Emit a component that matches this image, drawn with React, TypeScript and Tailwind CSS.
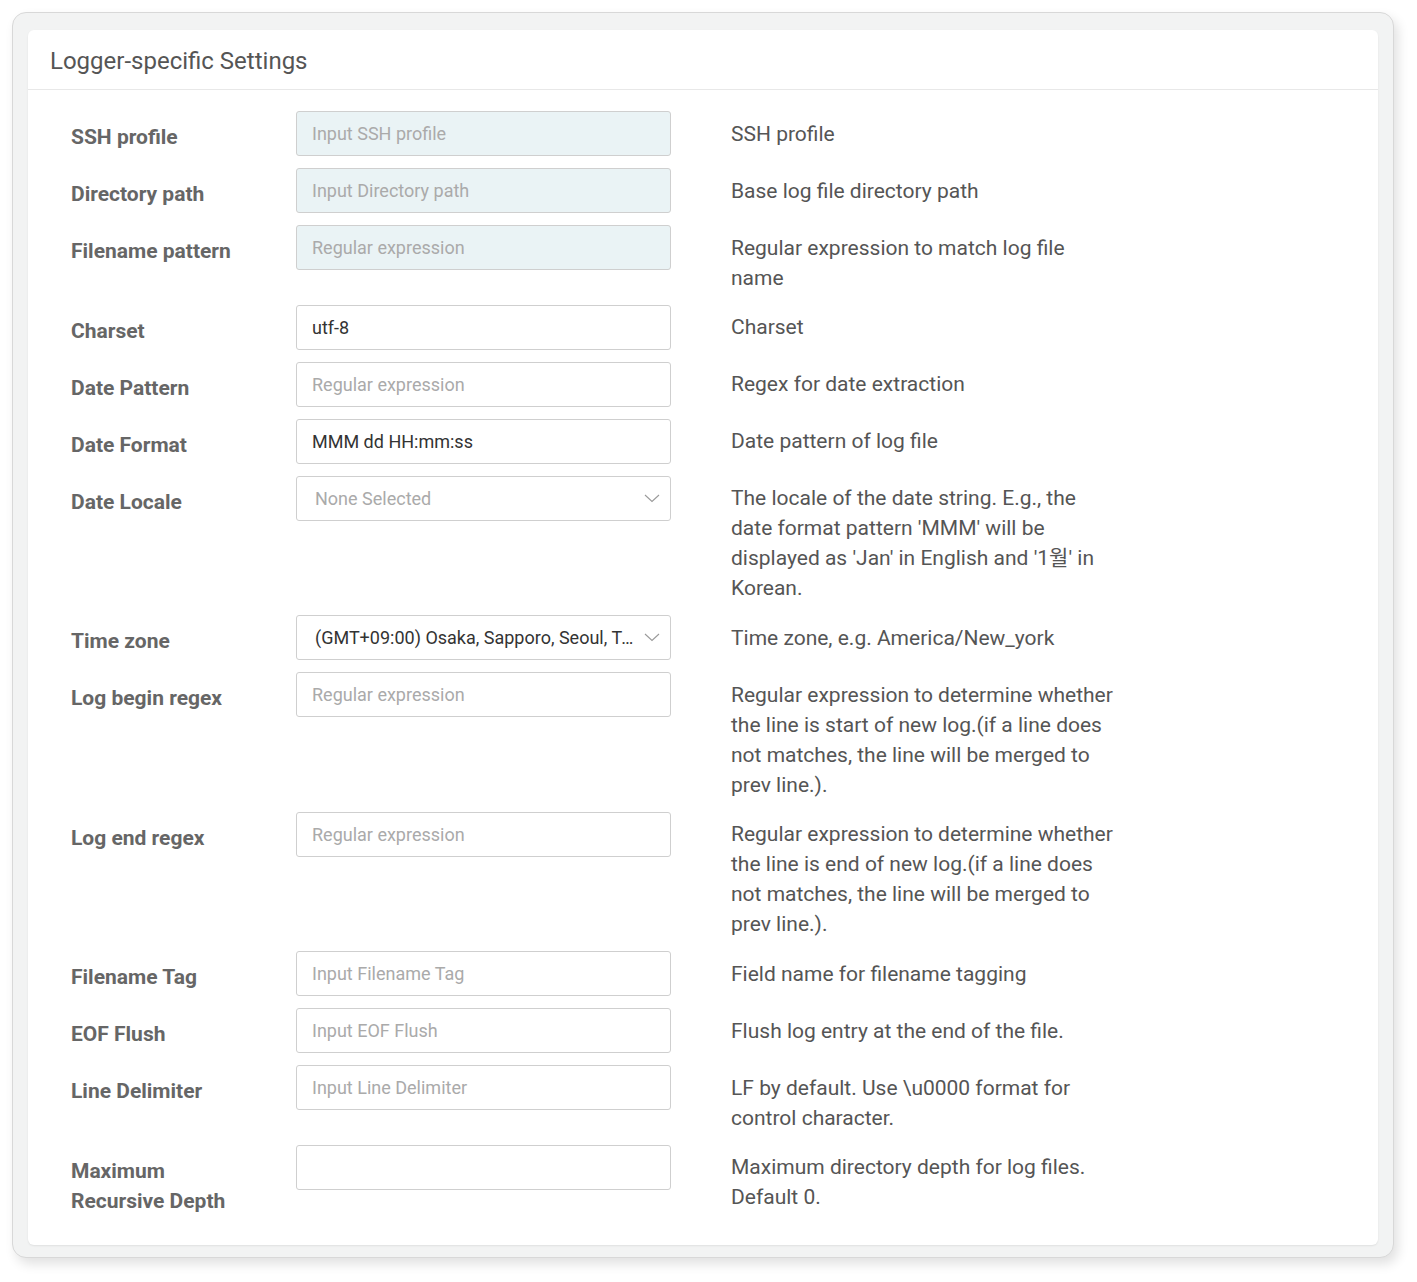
type Field = {
  label: string;
  kind: "input" | "disabled" | "select";
  value?: string;
  placeholder?: string;
  desc: string;
};

const fields: Field[] = [
  { label: "SSH profile", kind: "disabled", placeholder: "Input SSH profile", desc: "SSH profile" },
  { label: "Directory path", kind: "disabled", placeholder: "Input Directory path", desc: "Base log file directory path" },
  { label: "Filename pattern", kind: "disabled", placeholder: "Regular expression", desc: "Regular expression to match log file name" },
  { label: "Charset", kind: "input", value: "utf-8", desc: "Charset" },
  { label: "Date Pattern", kind: "input", placeholder: "Regular expression", desc: "Regex for date extraction" },
  { label: "Date Format", kind: "input", value: "MMM dd HH:mm:ss", desc: "Date pattern of log file" },
  {
    label: "Date Locale",
    kind: "select",
    placeholder: "None Selected",
    desc: "The locale of the date string. E.g., the date format pattern 'MMM' will be displayed as 'Jan' in English and '1월' in Korean.",
  },
  { label: "Time zone", kind: "select", value: "(GMT+09:00) Osaka, Sapporo, Seoul, Tokyo", desc: "Time zone, e.g. America/New_york" },
  {
    label: "Log begin regex",
    kind: "input",
    placeholder: "Regular expression",
    desc: "Regular expression to determine whether the line is start of new log.(if a line does not matches, the line will be merged to prev line.).",
  },
  {
    label: "Log end regex",
    kind: "input",
    placeholder: "Regular expression",
    desc: "Regular expression to determine whether the line is end of new log.(if a line does not matches, the line will be merged to prev line.).",
  },
  { label: "Filename Tag", kind: "input", placeholder: "Input Filename Tag", desc: "Field name for filename tagging" },
  { label: "EOF Flush", kind: "input", placeholder: "Input EOF Flush", desc: "Flush log entry at the end of the file." },
  { label: "Line Delimiter", kind: "input", placeholder: "Input Line Delimiter", desc: "LF by default. Use \\u0000 format for control character." },
  { label: "Maximum Recursive Depth", kind: "input", value: "", desc: "Maximum directory depth for log files. Default 0." },
];

function Chevron() {
  return (
    <svg width="16" height="9" viewBox="0 0 16 9" fill="none" className="shrink-0">
      <path d="M1 1l7 6.5L15 1" stroke="#9a9a9a" strokeWidth="1.1" />
    </svg>
  );
}

function Control({ f }: { f: Field }) {
  if (f.kind === "select") {
    return (
      <div className="flex h-[45px] w-[375px] shrink-0 items-center gap-2 rounded-[3px] border border-[#cfcfcf] bg-white pl-[18px] pr-[10px]">
        <span className={`flex-1 truncate text-[18px] ${f.value ? "text-[#333]" : "text-[#aaa]"}`}>
          {f.value ?? f.placeholder}
        </span>
        <Chevron />
      </div>
    );
  }
  const disabled = f.kind === "disabled";
  return (
    <input
      readOnly
      disabled={disabled}
      defaultValue={f.value}
      placeholder={f.placeholder}
      className={`h-[45px] w-[375px] shrink-0 rounded-[3px] border border-[#cfcfcf] px-[15px] text-[18px] text-[#333] outline-none placeholder:text-[#aaa] ${
        disabled ? "bg-[#eaf3f5]" : "bg-white"
      }`}
    />
  );
}

export default function App() {
  return (
    <div
      className="min-h-screen bg-white p-3"
      style={{ fontFamily: "Roboto, 'Noto Sans CJK KR', sans-serif" }}
    >
      <div className="w-[1382px] rounded-[14px] border border-[#d8d8d8] bg-[#f2f3f3] px-[15px] pt-[17px] pb-[12px] shadow-[4px_6px_12px_rgba(0,0,0,0.12)]">
        <div className="rounded-[6px] bg-white shadow-[0_1px_2px_rgba(0,0,0,0.08)]">
          <div className="flex h-[60px] items-center border-b border-[#e8e8e8] px-[22px] pt-[2px]">
            <h2 className="text-[24px] text-[#555]">Logger-specific Settings</h2>
          </div>
          <div className="flex flex-col px-[43px] pt-[21px] pb-[17px]">
            {fields.map((f) => (
              <div key={f.label} className="flex items-start pb-[12px]">
                <label className="w-[225px] shrink-0 pt-[11px] pr-[40px] text-[21px] leading-[30px] font-bold text-[#666]">
                  {f.label}
                </label>
                <Control f={f} />
                <p className="ml-[60px] w-[385px] pt-[7.5px] text-[21px] leading-[30px] text-[#555]">{f.desc}</p>
              </div>
            ))}
          </div>
        </div>
      </div>
    </div>
  );
}
